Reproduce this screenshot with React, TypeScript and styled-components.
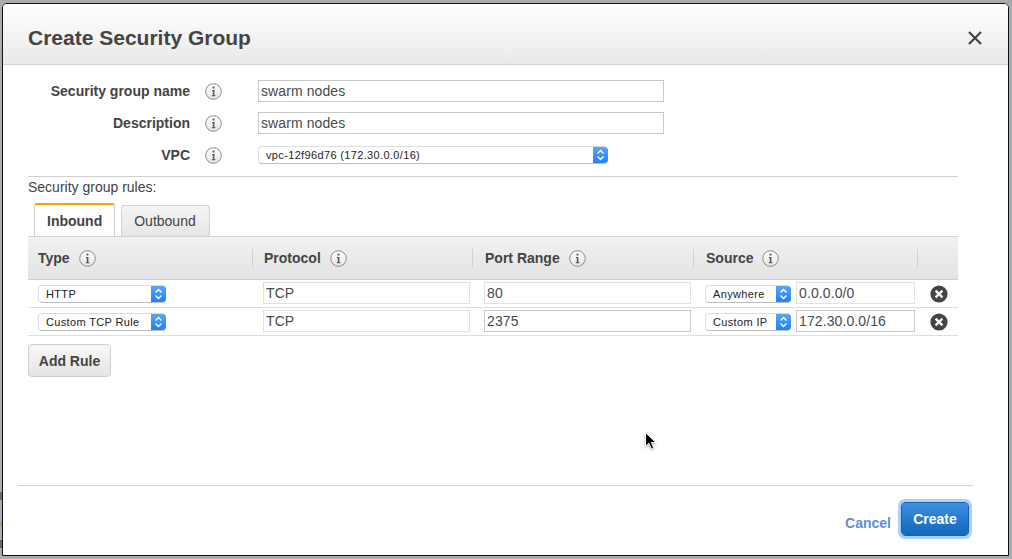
import styled, { createGlobalStyle } from "styled-components";

const GlobalStyle = createGlobalStyle`
  html, body {
    margin: 0;
    padding: 0;
    background: #a8acb0;
  }
  body {
    font-family: "Liberation Sans", Arial, sans-serif;
    color: #444;
  }
`;

const Page = styled.div`
  position: relative;
  width: 1012px;
  height: 559px;
  padding: 3px 3px 3px 2px;
  box-sizing: border-box;
  overflow: hidden;
`;

const Dialog = styled.div`
  height: 100%;
  box-sizing: border-box;
  display: flex;
  flex-direction: column;
  background: #fff;
  border: 1px solid #111;
  border-radius: 5px 5px 0 0;
  overflow: hidden;
`;

const Header = styled.div`
  height: 61px;
  flex: none;
  box-sizing: border-box;
  display: flex;
  align-items: center;
  justify-content: space-between;
  padding: 7px 26px 0 25px;
  background: linear-gradient(#ffffff, #e9e9e9);
  border-bottom: 1px solid #d4d4d4;
`;

const Title = styled.h1`
  margin: 0;
  font-size: 21px;
  font-weight: bold;
  color: #444;
`;

const Body = styled.div`
  flex: 1;
  display: flex;
  flex-direction: column;
  padding: 15px 50px 0 25px;
`;

const FormRow = styled.div<{ $gap: number }>`
  display: flex;
  align-items: center;
  height: 22px;
  margin-bottom: ${(p) => p.$gap}px;
`;

const Label = styled.div`
  width: 162px;
  text-align: right;
  font-size: 14px;
  font-weight: bold;
  color: #444;
`;

const InfoSlot = styled.div`
  width: 68px;
  padding-left: 15px;
  box-sizing: border-box;
  display: flex;
`;

const TextInput = styled.input<{ $width: number; $strong?: boolean }>`
  width: ${(p) => p.$width}px;
  height: 22px;
  box-sizing: border-box;
  padding: 0 2px;
  margin: 0;
  border: 1px solid ${(p) => (p.$strong ? "#c8c8c8" : "#e2e2e2")};
  border-radius: 0;
  outline: none;
  background: #fff;
  font-family: "Liberation Sans", Arial, sans-serif;
  font-size: 14px;
  letter-spacing: 0.1px;
  color: #4a4a4a;
`;

const RowInput = styled(TextInput)`
  margin-top: -1px;
`;

const SelectBox = styled.div<{ $width: number }>`
  width: ${(p) => p.$width}px;
  height: 18px;
  flex: none;
  box-sizing: border-box;
  display: flex;
  align-items: stretch;
  background: #fff;
  border: 1px solid #dcdcdc;
  border-bottom-color: #bdbdbd;
  border-right: none;
  border-radius: 4px;
  overflow: hidden;
`;

const SelectText = styled.div`
  flex: 1;
  padding-left: 7px;
  font-size: 11px;
  line-height: 16px;
  letter-spacing: 0.35px;
  color: #222;
  white-space: nowrap;
  overflow: hidden;
`;

const SelectArrows = styled.div`
  width: 15px;
  flex: none;
  display: flex;
  align-items: center;
  justify-content: center;
  margin: -1px 0;
  background: linear-gradient(#5ea6f5, #1b7ffb);
`;

const Divider = styled.div`
  height: 1px;
  flex: none;
  background: #d0d0d0;
`;

const RulesLabel = styled.div`
  margin-top: 2px;
  font-size: 14px;
  line-height: 16px;
  color: #444;
`;

const Tabs = styled.div`
  display: flex;
  align-items: flex-end;
  gap: 6px;
  height: 33px;
  margin-top: 8px;
  padding-left: 6px;
`;

const Tab = styled.div<{ $active?: boolean }>`
  height: ${(p) => (p.$active ? 33 : 31)}px;
  box-sizing: border-box;
  padding: 0 ${(p) => (p.$active ? 12 : 13)}px 0 12px;
  display: flex;
  align-items: center;
  font-size: 14px;
  font-weight: ${(p) => (p.$active ? "bold" : "normal")};
  color: #444;
  background: ${(p) =>
    p.$active ? "#fff" : "linear-gradient(#f4f4f4, #e6e6e6)"};
  border: 1px solid #d4d4d4;
  border-bottom: none;
  border-top: ${(p) => (p.$active ? "2px solid #f7a600" : "1px solid #d4d4d4")};
  border-radius: 3px 3px 0 0;
`;

const Table = styled.div`
  display: grid;
  grid-template-columns: 225px 220px 221px 224px 40px;
  border-top: 1px solid #d4d4d4;
`;

const HeadCell = styled.div<{ $last?: boolean; $indent: number }>`
  height: 43px;
  box-sizing: border-box;
  display: flex;
  align-items: center;
  gap: 9px;
  padding-left: ${(p) => p.$indent}px;
  font-size: 14px;
  font-weight: bold;
  color: #444;
  background: linear-gradient(#f1f1f1, #e3e3e3);
  border-bottom: 1px solid #cfcfcf;
  position: relative;
  &::after {
    content: "";
    display: ${(p) => (p.$last ? "none" : "block")};
    position: absolute;
    right: 0;
    top: 12px;
    height: 19px;
    width: 1px;
    background: #d2d2d2;
  }
`;

const Cell = styled.div<{ $indent: number }>`
  height: 28px;
  box-sizing: border-box;
  display: flex;
  align-items: center;
  padding-left: ${(p) => p.$indent}px;
  gap: 5px;
  border-bottom: 1px solid #dedede;
`;

const AddButton = styled.button`
  align-self: flex-start;
  width: 83px;
  height: 33px;
  margin: 8px 0 0;
  padding: 0;
  font-family: "Liberation Sans", Arial, sans-serif;
  font-size: 14px;
  font-weight: bold;
  color: #444;
  background: linear-gradient(#f8f8f8, #e4e4e4);
  border: 1px solid #cfcfcf;
  border-radius: 4px;
`;

const Footer = styled.div`
  flex: none;
  height: 70px;
  margin: 0 35px 0 15px;
  box-sizing: border-box;
  border-top: 1px solid #d2d2d2;
  display: flex;
  align-items: flex-start;
  justify-content: flex-end;
  padding-top: 16px;
`;

const CancelLink = styled.a`
  margin: 13px 10px 0 0;
  font-size: 14px;
  line-height: 16px;
  font-weight: bold;
  color: #5b8fde;
`;

const CreateButton = styled.button`
  width: 68px;
  height: 34px;
  margin: 0 4px 0 0;
  padding: 0 0 1px;
  box-sizing: border-box;
  font-family: "Liberation Sans", Arial, sans-serif;
  font-size: 14px;
  font-weight: bold;
  color: #fff;
  background: linear-gradient(#3d8fe0, #1268bb);
  background-clip: padding-box;
  border: 1px solid #1a5fa8;
  border-radius: 4px;
  box-shadow: 0 0 0 3px #a6d2fb;
`;

const Cursor = styled.svg`
  position: absolute;
  left: 643px;
  top: 431px;
  filter: drop-shadow(0 1px 1px rgba(0, 0, 0, 0.35));
`;

const Smudge = styled.div<{ $top: number; $height: number; $color: string }>`
  position: absolute;
  left: 0;
  top: ${(p) => p.$top}px;
  width: 2px;
  height: ${(p) => p.$height}px;
  background: ${(p) => p.$color};
`;

function InfoIcon() {
  return (
    <svg width="17" height="17" viewBox="0 0 17 17">
      <defs>
        <linearGradient id="info-fill" x1="0" y1="0" x2="0" y2="1">
          <stop offset="0" stopColor="#fff" />
          <stop offset="1" stopColor="#e6e6e6" />
        </linearGradient>
      </defs>
      <circle cx="8.5" cy="8.5" r="7.8" fill="url(#info-fill)" stroke="#8a8a8a" strokeWidth="1" />
      <rect x="7.6" y="3.6" width="1.8" height="1.9" fill="#555" />
      <path d="M7 7h2.4v5.2h1v1H6.8v-1h1V8H7z" fill="#555" />
    </svg>
  );
}

function Arrows() {
  return (
    <svg width="9" height="12" viewBox="0 0 9 12">
      <path d="M1.5 4.5 4.5 1.5 7.5 4.5M1.5 7.5 4.5 10.5 7.5 7.5" fill="none" stroke="#fff" strokeWidth="1.4" />
    </svg>
  );
}

function Select({ width, children }: { width: number; children: string }) {
  return (
    <SelectBox $width={width}>
      <SelectText>{children}</SelectText>
      <SelectArrows>
        <Arrows />
      </SelectArrows>
    </SelectBox>
  );
}

function RemoveIcon() {
  return (
    <svg width="18" height="18" viewBox="0 0 18 18">
      <circle cx="9" cy="9" r="8.6" fill="#444" />
      <path d="M5.6 5.6 12.4 12.4M12.4 5.6 5.6 12.4" stroke="#fff" strokeWidth="2.2" />
    </svg>
  );
}

const columns = [
  { name: "Type", indent: 10 },
  { name: "Protocol", indent: 11 },
  { name: "Port Range", indent: 12 },
  { name: "Source", indent: 12 },
];

const rules = [
  { type: "HTTP", protocol: "TCP", port: "80", source: "Anywhere", cidr: "0.0.0.0/0", strong: false },
  { type: "Custom TCP Rule", protocol: "TCP", port: "2375", source: "Custom IP", cidr: "172.30.0.0/16", strong: true },
];

type RowProps = (typeof rules)[number];

function Row({ type, protocol, port, source, cidr, strong }: RowProps) {
  return (
    <>
      <Cell $indent={10}><Select width={128}>{type}</Select></Cell>
      <Cell $indent={10}><RowInput $width={207} readOnly value={protocol} /></Cell>
      <Cell $indent={11}><RowInput $width={207} $strong={strong} readOnly value={port} /></Cell>
      <Cell $indent={11}>
        <Select width={86}>{source}</Select>
        <RowInput $width={119} $strong={strong} readOnly value={cidr} />
      </Cell>
      <Cell $indent={12}><RemoveIcon /></Cell>
    </>
  );
}

export default function App() {
  return (
    <Page>
      <GlobalStyle />
      <Smudge $top={492} $height={8} $color="#5a6f86" />
      <Smudge $top={523} $height={3} $color="#c8962e" />
      <Smudge $top={540} $height={8} $color="#5f6468" />
      <Dialog>
        <Header>
          <Title>Create Security Group</Title>
          <svg width="14" height="14" viewBox="0 0 14 14">
            <path d="M1 1 13 13M13 1 1 13" stroke="#444" strokeWidth="2.2" />
          </svg>
        </Header>
        <Body>
          <FormRow $gap={10}>
            <Label>Security group name</Label>
            <InfoSlot><InfoIcon /></InfoSlot>
            <TextInput $width={406} $strong readOnly value="swarm nodes" />
          </FormRow>
          <FormRow $gap={10}>
            <Label>Description</Label>
            <InfoSlot><InfoIcon /></InfoSlot>
            <TextInput $width={406} $strong readOnly value="swarm nodes" />
          </FormRow>
          <FormRow $gap={10}>
            <Label>VPC</Label>
            <InfoSlot><InfoIcon /></InfoSlot>
            <Select width={350}>vpc-12f96d76 (172.30.0.0/16)</Select>
          </FormRow>
          <Divider />
          <RulesLabel>Security group rules:</RulesLabel>
          <Tabs>
            <Tab $active>Inbound</Tab>
            <Tab>Outbound</Tab>
          </Tabs>
          <Table>
            {columns.map(({ name, indent }) => (
              <HeadCell key={name} $indent={indent}>
                {name} <InfoIcon />
              </HeadCell>
            ))}
            <HeadCell $last $indent={0} />
            {rules.map((rule) => (
              <Row key={rule.port} {...rule} />
            ))}
          </Table>
          <AddButton>Add Rule</AddButton>
        </Body>
        <Footer>
          <CancelLink>Cancel</CancelLink>
          <CreateButton>Create</CreateButton>
        </Footer>
      </Dialog>
      <Cursor width="14" height="20" viewBox="0 0 14 20">
        <path d="M2.5 1.5v14l3.4-3.2 2.4 5.4 2.4-1-2.4-5.2h4.6z" fill="#000" stroke="#fff" strokeWidth="1" />
      </Cursor>
    </Page>
  );
}
